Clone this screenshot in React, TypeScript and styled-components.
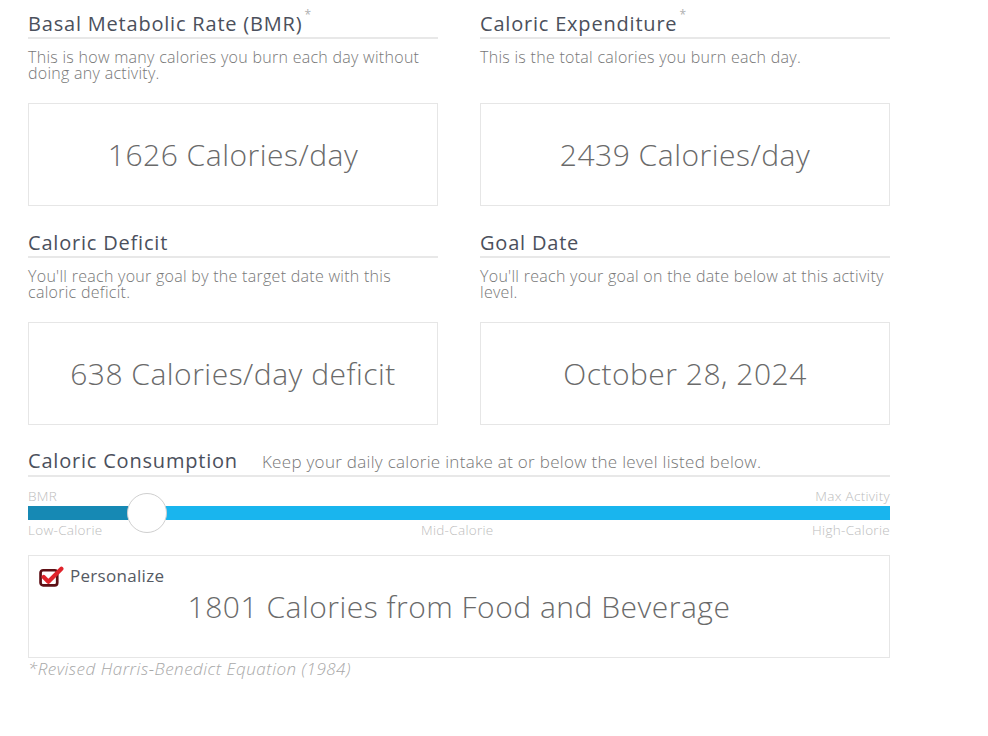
import styled, { createGlobalStyle } from "styled-components";

const GlobalStyles = createGlobalStyle`
  body {
    margin: 0;
    background: #ffffff;
    font-family: "Open Sans", Lato, Arial, sans-serif;
  }
`;

const Page = styled.div`
  width: 862px;
  padding: 6px 0 0 28px;
`;

const Grid = styled.div`
  display: grid;
  grid-template-columns: 410px 410px;
  column-gap: 42px;
  row-gap: 24px;
`;

const Card = styled.div`
  display: flex;
  flex-direction: column;
`;

const Heading = styled.h2`
  margin: 0;
  font-size: 20px;
  line-height: 26px;
  font-weight: 400;
  letter-spacing: 0.8px;
  color: #4b505c;
  border-bottom: 2px solid #e8e8e8;
  display: flex;
  align-items: baseline;
  gap: 24px;
  sup {
    font-size: 12px;
    color: #b0b0b0;
    margin-left: 2px;
    position: relative;
    top: -4px;
  }
`;

const Desc = styled.p`
  margin: 10px 0 0;
  font-size: 16px;
  line-height: 16px;
  letter-spacing: 0.28px;
  font-weight: 300;
  color: #777777;
  min-height: 32px;
`;

const InlineDesc = styled.span`
  font-size: 17px;
  font-weight: 300;
  letter-spacing: 0.3px;
  color: #777777;
`;

const ValueBox = styled.div`
  margin-top: 22px;
  height: 101px;
  border: 1px solid #e6e6e6;
  display: flex;
  align-items: center;
  justify-content: center;
  font-size: 30px;
  letter-spacing: 0.5px;
  font-weight: 300;
  color: #6a6a6a;
`;

const Consumption = styled.div`
  margin-top: 23px;
`;

const Slider = styled.div`
  margin-top: 12px;
`;

const LabelRow = styled.div`
  display: flex;
  justify-content: space-between;
  font-size: 13.5px;
  letter-spacing: 0.3px;
  line-height: 14px;
  font-weight: 300;
  color: #bdbdbd;
`;

const Track = styled.div`
  position: relative;
  margin: 3px 0;
  height: 14px;
  background: #19b5ee;
`;

const Fill = styled.div`
  height: 100%;
  background: #1689b4;
`;

const Thumb = styled.div`
  position: absolute;
  top: -13px;
  width: 38px;
  height: 38px;
  border-radius: 50%;
  background: #ffffff;
  border: 1px solid #cfcfcf;
`;

const ResultBox = styled.div`
  margin-top: 18px;
  height: 81px;
  padding: 10px 10px 10px;
  border: 1px solid #e6e6e6;
  display: flex;
  flex-direction: column;
`;

const CheckLabel = styled.label`
  display: flex;
  align-items: center;
  gap: 6px;
  font-size: 17px;
  letter-spacing: 0.3px;
  line-height: 20px;
  font-weight: 400;
  color: #555a63;
`;

const BigText = styled.div`
  margin-top: 3px;
  text-align: center;
  font-size: 30px;
  letter-spacing: 0.5px;
  line-height: 34px;
  font-weight: 300;
  color: #6a6a6a;
`;

const Footnote = styled.div`
  margin-top: 1px;
  font-size: 17px;
  letter-spacing: 0.5px;
  line-height: 20px;
  font-style: italic;
  font-weight: 300;
  color: #a8a8a8;
`;

const CheckIcon = () => (
  <svg width="25" height="21" viewBox="0 0 24 20">
    <rect x="1.5" y="4" width="16" height="14.5" rx="2.5" fill="none" stroke="#5e1016" strokeWidth="2.6" />
    <path d="M4.5 10.5 L9 15 L21.5 2.5" fill="none" stroke="#e0232b" strokeWidth="4" strokeLinecap="round" strokeLinejoin="round" />
  </svg>
);

const cards = [
  {
    title: "Basal Metabolic Rate (BMR)",
    star: true,
    desc: "This is how many calories you burn each day without doing any activity.",
    value: "1626 Calories/day",
  },
  {
    title: "Caloric Expenditure",
    star: true,
    desc: "This is the total calories you burn each day.",
    value: "2439 Calories/day",
  },
  {
    title: "Caloric Deficit",
    star: false,
    desc: "You'll reach your goal by the target date with this caloric deficit.",
    value: "638 Calories/day deficit",
  },
  {
    title: "Goal Date",
    star: false,
    desc: "You'll reach your goal on the date below at this activity level.",
    value: "October 28, 2024",
  },
];

function App() {
  const fillPx = 100;
  return (
    <Page>
      <GlobalStyles />
      <Grid>
        {cards.map((c) => (
          <Card key={c.title}>
            <Heading>
              <span>
                {c.title}
                {c.star && <sup>*</sup>}
              </span>
            </Heading>
            <Desc>{c.desc}</Desc>
            <ValueBox>{c.value}</ValueBox>
          </Card>
        ))}
      </Grid>
      <Consumption>
        <Heading>
          <span>Caloric Consumption</span>
          <InlineDesc>Keep your daily calorie intake at or below the level listed below.</InlineDesc>
        </Heading>
        <Slider>
          <LabelRow>
            <span>BMR</span>
            <span>Max Activity</span>
          </LabelRow>
          <Track>
            <Fill style={{ width: fillPx }} />
            <Thumb style={{ left: fillPx - 1 }} />
          </Track>
          <LabelRow>
            <span>Low-Calorie</span>
            <span>Mid-Calorie</span>
            <span>High-Calorie</span>
          </LabelRow>
        </Slider>
        <ResultBox>
          <CheckLabel>
            <CheckIcon />
            Personalize
          </CheckLabel>
          <BigText>1801 Calories from Food and Beverage</BigText>
        </ResultBox>
        <Footnote>*Revised Harris-Benedict Equation (1984)</Footnote>
      </Consumption>
    </Page>
  );
}

export default App;
